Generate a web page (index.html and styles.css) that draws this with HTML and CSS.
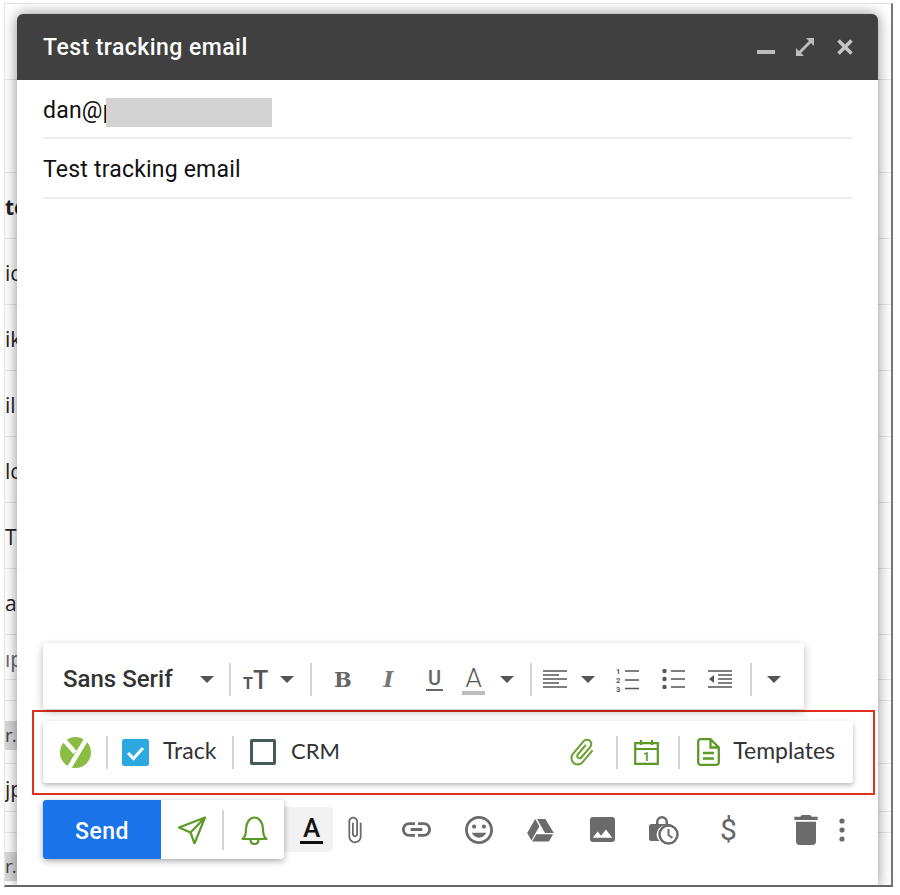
FILE: index.html
```html
<!DOCTYPE html>
<html lang="en">
<head>
<meta charset="utf-8">
<title>Test tracking email</title>
<link rel="stylesheet" href="styles.css">
</head>
<body>
<div class="frame">
  <div class="list">
    <div class="row r-head"></div>
    <div class="row r-tall"></div>
    <div class="row r-std bold">te</div>
    <div class="row r-std">ic</div>
    <div class="row r-std">ik</div>
    <div class="row r-std">il</div>
    <div class="row r-std">lc</div>
    <div class="row r-std">T</div>
    <div class="row r-std">a</div>
    <div class="row r-a">ıp</div>
    <div class="row r-b"></div>
    <div class="row r-c"><span class="chip chip-a">r.</span></div>
    <div class="row r-d">jp</div>
    <div class="row r-b"></div>
    <div class="row r-e"><span class="chip chip-b">r.</span></div>
  </div>

  <div class="compose">
    <header class="head">
      <span class="head-title">Test tracking email</span>
      <div class="head-icons">
        <svg class="hi-min" viewBox="0 0 18 4"><rect width="18" height="4" fill="#bdbdbd"/></svg>
        <svg class="hi-exp" viewBox="0 0 20 20"><path d="M11 1h8v8l-3-3-10 10 3 3H1v-8l3 3L14 4z" fill="#bdbdbd"/></svg>
        <svg class="hi-x" viewBox="0 0 16 16"><path d="M1.500 1.500l13 13M14.500 1.500l-13 13" stroke="#c4c4c4" stroke-width="3.600" fill="none"/></svg>
      </div>
    </header>

    <div class="field field-to"><span>dan@p</span><span class="redact"></span></div>
    <div class="field">Test tracking email</div>
    <div class="body"></div>

    <div class="fmt panel">
      <span class="f-font">Sans Serif</span>
      <i class="arrow m30"></i>
      <i class="sep m15"></i>
      <span class="f-size"><small>T</small>T</span>
      <i class="arrow m10"></i>
      <i class="sep m16"></i>
      <span class="f-b">B</span>
      <span class="f-i">I</span>
      <span class="f-u">U</span>
      <span class="f-a">A</span>
      <i class="arrow m15"></i>
      <i class="sep m16"></i>
      <svg class="f-align" viewBox="0 0 24 18"><path d="M0 1h24M0 5h16M0 9h24M0 13h16M0 17h24" stroke="#555" stroke-width="1.6"/></svg>
      <i class="arrow m14"></i>
      <svg class="f-num" viewBox="0 0 23 27"><text x="0" y="7" class="n">1</text><text x="0" y="16" class="n">2</text><text x="0" y="25" class="n">3</text><path d="M9 4h14M9 13h14M9 21.500h14" stroke="#555" stroke-width="1.6"/></svg>
      <svg class="f-bul" viewBox="0 0 23 20"><circle cx="2.5" cy="2" r="2.2" fill="#555"/><circle cx="2.500" cy="10" r="2.200" fill="#555"/><circle cx="2.500" cy="18" r="2.200" fill="#555"/><path d="M9 2h14M9 10h14M9 18h14" stroke="#555" stroke-width="1.6"/></svg>
      <svg class="f-ind" viewBox="0 0 24 18"><path d="M0 1h24M10 5h14M10 9h14M10 13h14M0 17h24" stroke="#555" stroke-width="1.600"/><path d="M6 5v8L1 9z" fill="#555"/></svg>
      <i class="sep m18"></i>
      <i class="arrow m15"></i>
    </div>

    <div class="redbox">
      <div class="bar panel">
        <svg class="y-logo" viewBox="0 0 31 31"><circle cx="15.500" cy="15.500" r="15.500" fill="#8bbd45"/><path d="M4 3l11 12.500M27 1L9 31" stroke="#fff" stroke-width="4.500" fill="none"/></svg>
        <i class="sep y-sep1"></i>
        <svg class="check" viewBox="0 0 27 27"><rect width="27" height="27" rx="2.500" fill="#2ea8e0"/><path d="M6 14l5.500 5.500L21 9" stroke="#fff" stroke-width="3" fill="none"/></svg>
        <span class="y-text y-track">Track</span>
        <i class="sep y-sep2"></i>
        <span class="crmbox"></span>
        <span class="y-text y-crm">CRM</span>
        <svg class="y-clip" viewBox="0 0 24 24"><path fill="#6aa12f" d="M16.500 6v11.500c0 2.210-1.790 4-4 4s-4-1.790-4-4V5c0-1.380 1.120-2.500 2.500-2.500s2.500 1.120 2.500 2.500v10.500c0 .55-.45 1-1 1s-1-.45-1-1V6H10v9.500c0 1.380 1.120 2.500 2.500 2.500s2.500-1.120 2.500-2.500V5c0-2.210-1.790-4-4-4S7 2.790 7 5v12.500c0 3.040 2.460 5.500 5.500 5.500s5.500-2.460 5.500-5.500V6h-1.500z"/></svg>
        <i class="sep y-sep3"></i>
        <svg class="y-cal" viewBox="0 0 25 26"><path d="M1.200 4.200h22.600v20.600H1.200zM1.200 10h22.600M7 1v5M18 1v5" fill="none" stroke="#5c9a26" stroke-width="2.200"/><text x="12.500" y="22" class="cal-n">1</text></svg>
        <i class="sep y-sep4"></i>
        <svg class="y-doc" viewBox="0 0 23 28"><path d="M3.500 1.200h10l8.300 8.300v14.800a2.500 2.500 0 0 1-2.500 2.500H3.500A2.500 2.500 0 0 1 1.200 24.300V3.500a2.500 2.500 0 0 1 2.300-2.300zM13.500 1.200v8.300h8.300M6 15h11M6 20.500h11" fill="none" stroke="#5c9a26" stroke-width="2.300"/></svg>
        <span class="y-text y-tmpl">Templates</span>
      </div>
    </div>

    <div class="sendrow">
      <div class="sendgroup">
        <button class="send">Send</button>
        <svg class="s-plane" viewBox="0 0 28 28"><path d="M27 1.500L1 11.500l11.500 5 4 11zM27 1.500L12.500 16.500" fill="none" stroke="#5c9a26" stroke-width="2.200" stroke-linejoin="round"/></svg>
        <i class="sep s-sep"></i>
        <svg class="s-bell" viewBox="0 0 27 30"><path d="M1.500 24c3-2 3.500-4.500 3.500-10 0-6 3.500-11.500 8.500-11.500S22 8 22 14c0 5.500.5 8 3.500 10zM9.500 24.500c0 3 1.800 4.500 4 4.500s4-1.500 4-4.500" fill="none" stroke="#5c9a26" stroke-width="2.200" stroke-linejoin="round"/></svg>
      </div>
      <div class="s-color"><span>A</span></div>
      <svg class="g-clip" viewBox="5 0 15 24"><path d="M16.500 6v11.500c0 2.210-1.790 4-4 4s-4-1.790-4-4V5c0-1.380 1.120-2.500 2.500-2.500s2.500 1.120 2.500 2.500v10.500c0 .55-.45 1-1 1s-1-.45-1-1V6H10v9.500c0 1.380 1.120 2.500 2.500 2.500s2.500-1.120 2.500-2.500V5c0-2.210-1.790-4-4-4S7 2.790 7 5v12.500c0 3.040 2.460 5.500 5.500 5.500s5.500-2.460 5.500-5.500V6h-1.500z"/></svg>
      <svg class="g-link" viewBox="2 7 20 10"><path d="M3.900 12c0-1.710 1.390-3.100 3.100-3.100h4V7H7c-2.760 0-5 2.240-5 5s2.240 5 5 5h4v-1.900H7c-1.710 0-3.100-1.390-3.100-3.100zM8 13h8v-2H8v2zm9-6h-4v1.900h4c1.710 0 3.100 1.390 3.100 3.100s-1.390 3.100-3.100 3.100h-4V17h4c2.760 0 5-2.240 5-5s-2.240-5-5-5z"/></svg>
      <svg class="g-emoji" viewBox="2 2 20 20"><path d="M11.990 2C6.470 2 2 6.480 2 12s4.470 10 9.990 10C17.520 22 22 17.520 22 12S17.520 2 11.990 2zM12 20c-4.420 0-8-3.580-8-8s3.580-8 8-8 8 3.580 8 8-3.580 8-8 8zm3.500-9c.83 0 1.500-.67 1.500-1.500S16.330 8 15.500 8 14 8.670 14 9.500s.67 1.500 1.500 1.500zm-7 0c.83 0 1.500-.67 1.500-1.500S9.330 8 8.500 8 7 8.670 7 9.500 7.670 11 8.500 11zm3.500 6.500c2.330 0 4.310-1.460 5.110-3.500H6.890c.8 2.040 2.780 3.500 5.110 3.500z"/></svg>
      <svg class="g-drive" viewBox="1 3 22 19"><path d="M7.710 3.500L1.150 15l3.430 6 6.550-11.500L7.710 3.500zm1.420 0h6.860l6.860 11.500H15.700L9.130 3.500zM8.570 16l-3.430 5.800h13.720l3.430-5.800H8.570z"/></svg>
      <svg class="g-img" viewBox="3 3 18 18"><path d="M21 19V5c0-1.100-.9-2-2-2H5c-1.100 0-2 .9-2 2v14c0 1.100.9 2 2 2h14c1.100 0 2-.9 2-2zM8.500 13.500l2.500 3.010L14.500 12l4.500 6H5l3.500-4.500z"/></svg>
      <svg class="g-lock" viewBox="0 0 30 30"><path d="M7 9V7a6 6 0 0 1 12 0v2h1.500A2.500 2.500 0 0 1 23 10.500H17a9 9 0 0 0-6.500 15.500H2.500A2.500 2.500 0 0 1 0 23.500V11.500A2.500 2.500 0 0 1 2.500 9zM9.500 9h7V7a3.500 3.500 0 0 0-7 0z"/><circle cx="19.500" cy="19.500" r="9" fill="none" stroke="#6b6b6b" stroke-width="2.500"/><path d="M19.500 14v6l4 3" fill="none" stroke="#6b6b6b" stroke-width="2"/></svg>
      <span class="g-dollar">$</span>
      <svg class="g-trash" viewBox="5 3 14 18"><path d="M6 19c0 1.100.9 2 2 2h8c1.100 0 2-.9 2-2V7H6v12zM19 4h-3.500l-1-1h-5l-1 1H5v2h14V4z"/></svg>
      <svg class="g-more" viewBox="0 0 6 24"><circle cx="3" cy="3" r="2.600"/><circle cx="3" cy="12" r="2.600"/><circle cx="3" cy="21" r="2.600"/></svg>
    </div>
  </div>
</div>
</body>
</html>
```
FILE: styles.css
```css
* { box-sizing: border-box; }
html, body { margin: 0; padding: 0; background: #fff; }
body { width: 900px; height: 895px; overflow: hidden; position: relative; font-family: Roboto, "Liberation Sans", sans-serif; color: #111; }
i { display: block; flex: none; }
svg { display: block; flex: none; }

.frame { position: absolute; left: 4px; top: 3px; width: 889px; height: 884px; overflow: hidden; background: #fff; border-top: 1px solid #e2e2e2; border-left: 1px solid #e4e4e4; border-right: 2px solid #777; border-bottom: 2px solid #666; }

.list { display: flex; flex-direction: column; }
.row { flex: none; display: flex; align-items: center; border-bottom: 1px solid #e6e6e6; font: 21px "Open Sans", sans-serif; color: #222; white-space: nowrap; padding-top: 3px; }
.bold { font-weight: 700; }
.r-head { height: 76px; }
.r-tall { height: 93px; }
.r-std { height: 66px; }
.r-a { height: 45px; color: #666; }
.r-b { height: 21px; }
.r-c { height: 63px; padding-top: 0; }
.r-d { height: 48px; }
.r-e { height: 53px; border-bottom: 0; padding-top: 0; }
.chip { background: #d8d8d8; height: 29px; line-height: 29px; width: 14px; font-size: 19px; color: #444; letter-spacing: -1px; }
.chip-a { margin-top: 6px; }
.chip-b { margin-top: 14px; }

.compose { position: absolute; left: 12px; top: 10px; width: 861px; height: 872px; background: #fff; display: flex; flex-direction: column; border-radius: 6px 6px 0 0; box-shadow: 0 0 14px rgba(0,0,0,.45); }
.head { flex: none; height: 66px; background: #404040; border-radius: 6px 6px 0 0; display: flex; align-items: center; justify-content: space-between; padding: 0 25px 0 26px; }
.head-title { font-size: 23px; font-weight: 500; color: #fff; letter-spacing: .45px; }
.head-icons { display: flex; align-items: center; }
.hi-min { width: 18px; height: 4px; margin-top: 9px; }
.hi-exp { width: 20px; height: 20px; margin-left: 20px; margin-top: -1px; }
.hi-x { width: 16px; height: 16px; margin-left: 22px; }

.field { flex: none; height: 60px; margin: 0 26px; border-bottom: 2px solid #eee; display: flex; align-items: center; font-size: 23px; letter-spacing: .2px; color: #111; padding-top: 3px; }
.field-to { height: 59px; position: relative; padding-top: 4px; }
.redact { position: absolute; left: 63px; top: 18px; width: 166px; height: 29px; background: #d3d3d3; }
.body { flex: 1; }

.panel { background: #fff; display: flex; align-items: center; flex: none; }
.sep { width: 2px; height: 33px; background: #d4d4d4; }
.m10 { margin-left: 10px; } .m14 { margin-left: 14px; } .m15 { margin-left: 15px; } .m16 { margin-left: 16px; } .m18 { margin-left: 18px; } .m30 { margin-left: 30px; }
.arrow { width: 0; height: 0; box-sizing: content-box; border-left: 7px solid transparent; border-right: 7px solid transparent; border-top: 7px solid #555; }

.fmt { margin-left: 26px; width: 761px; height: 66px; padding: 6px 0 0 20px; border-radius: 3px; box-shadow: 0 3px 8px rgba(0,0,0,.28); position: relative; }
.f-font { width: 107px; font-size: 24px; font-weight: 500; color: #333; white-space: nowrap; }
.f-size { width: 27px; margin-left: 12px; font-size: 25px; font-weight: 500; color: #555; line-height: 1; white-space: nowrap; margin-top: 3px; }
.f-size small { font-size: 16px; font-weight: 700; }
.f-b { width: 15px; margin-left: 22px; font: 700 21px "DejaVu Serif", serif; color: #666; text-align: center; }
.f-i { width: 17px; margin-left: 31px; font: italic 700 22px "DejaVu Serif", serif; color: #777; text-align: center; }
.f-u { width: 17px; margin-left: 29px; font: 500 20px Roboto, sans-serif; color: #666; text-align: center; border-bottom: 2px solid #666; line-height: 21px; }
.f-a { width: 23px; margin-left: 19px; font: 300 26px Roboto, sans-serif; color: #555; text-align: center; border-bottom: 4px solid #bdbdbd; line-height: 25px; margin-top: 2px; }
.f-align { width: 24px; height: 18px; margin-left: 11px; }
.f-num { width: 23px; height: 27px; margin-left: 21px; margin-top: 2px; }
.n { font: 700 7.500px Roboto, sans-serif; fill: #555; }
.f-bul { width: 23px; height: 20px; margin-left: 23px; }
.f-ind { width: 24px; height: 18px; margin-left: 23px; }

.redbox { flex: none; width: 843px; height: 85px; margin: 1px 0 0 15px; border: 2px solid #e1301e; padding: 9px 20px 0 9px; }
.bar { height: 62px; padding-left: 17px; border-radius: 3px; box-shadow: 0 2px 5px rgba(0,0,0,.3); }
.y-logo { width: 31px; height: 31px; }
.y-sep1 { margin-left: 15px; }
.check { width: 27px; height: 27px; margin-left: 14px; }
.y-text { font: 400 23px Lato, sans-serif; color: #333; white-space: nowrap; margin-top: -4px; }
.y-track { margin-left: 14px; width: 54px; }
.y-sep2 { margin-left: 15px; }
.crmbox { width: 26px; height: 26px; margin-left: 16px; border: 3px solid #46595c; border-radius: 2px; }
.y-crm { margin-left: 15px; font-size: 22px; }
.y-clip { width: 32px; height: 32px; margin-left: auto; transform: rotate(40deg); }
.y-sep3 { margin-left: 18px; }
.y-cal { width: 25px; height: 26px; margin-left: 16px; }
.cal-n { font: 700 12px Roboto, sans-serif; fill: #5c9a26; text-anchor: middle; }
.y-sep4 { margin-left: 19px; }
.y-doc { width: 23px; height: 28px; margin-left: 17px; }
.y-tmpl { margin-left: 13px; margin-right: 18px; }

.sendrow { flex: none; height: 59px; margin: 5px 0 27px 26px; display: flex; align-items: center; fill: #6b6b6b; position: relative; }
.sendgroup { display: flex; align-items: center; width: 241px; height: 59px; background: #fff; border-radius: 3px; box-shadow: 0 2px 6px rgba(0,0,0,.35); position: relative; z-index: 1; }
.send { width: 118px; height: 59px; border: 0; padding: 3px 0 0; border-radius: 3px 0 0 3px; background: #1a73e8; color: #fff; font: 500 23px Roboto, sans-serif; letter-spacing: .5px; }
.s-plane { width: 28px; height: 28px; margin-left: 17px; }
.s-sep { margin-left: 16px; height: 40px; }
.s-bell { width: 27px; height: 30px; margin-left: 17px; }
.s-color { width: 49px; height: 45px; background: #f2f2f2; border-radius: 0 4px 4px 0; display: flex; justify-content: flex-end; align-items: center; padding-right: 10px; }
.s-color span { font: 500 26px Roboto, sans-serif; color: #111; border-bottom: 3px solid #111; line-height: 25px; width: 23px; text-align: center; }
.g-clip { width: 18px; height: 30px; margin-left: 13px; }
.g-link { width: 29px; height: 15px; margin-left: 38px; }
.g-emoji { width: 28px; height: 28px; margin-left: 34px; }
.g-drive { width: 27px; height: 24px; margin-left: 34px; }
.g-img { width: 25px; height: 25px; margin-left: 36px; }
.g-lock { width: 30px; height: 30px; margin-left: 34px; }
.g-dollar { width: 16px; margin-left: 41px; font: 400 30px Roboto, sans-serif; color: #666; text-align: center; }
.g-trash { width: 24px; height: 30px; margin-left: 58px; }
.g-more { width: 6px; height: 24px; margin-left: 21px; }
```
